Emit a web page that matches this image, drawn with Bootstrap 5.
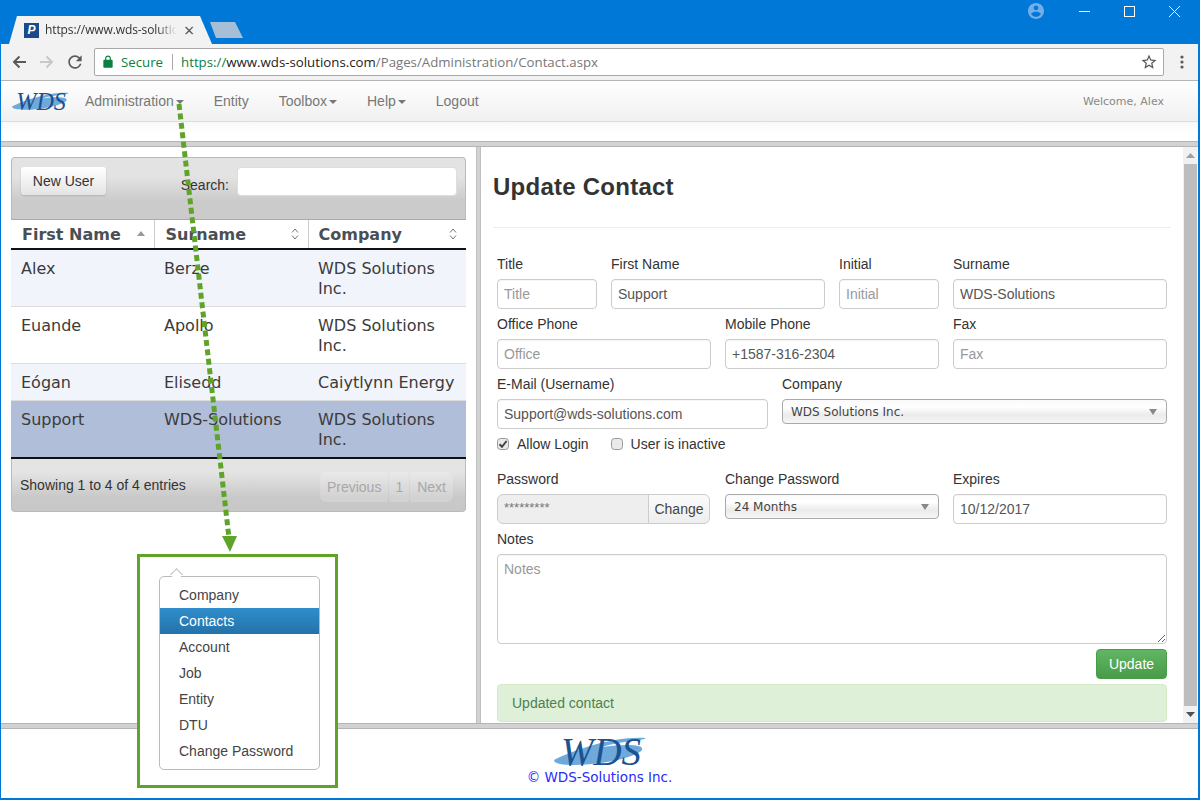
<!DOCTYPE html>
<html lang="en">
  <head>
    <meta charset="UTF-8" />
    <title>Update Contact</title>
    <link href="https://cdn.jsdelivr.net/npm/bootstrap@5.3.3/dist/css/bootstrap.min.css" rel="stylesheet" />
    <style>
      html, body { margin: 0; height: 800px; overflow: hidden; background: #fff; }
      body { font-family: "Liberation Sans", Arial, sans-serif; font-size: 14px; color: #333; line-height: 20px; }
      .app-window { position: relative; width: 1200px; height: 800px; border: solid #0078d7; border-width: 0 2px 2px 1px; overflow: hidden; }

      /* browser chrome */
      .title-bar { height: 44px; margin: 0 -2px 0 -1px; background: #0078d7; padding: 0 3px 0 9px; }
      .tab-shape { width: 203px; height: 28px; margin-top: 16px; padding: 0 0 0 15px; background: #f2f2f2; clip-path: polygon(0 100%, 8px 0, 191px 0, 203px 100%); font-family: "Open Sans", sans-serif; font-size: 12px; }
      .tab-icon { width: 15px; height: 15px; background: #1a4a8a; color: #fff; font: italic bold 12px/15px "Liberation Sans", sans-serif; text-align: center; flex: none; }
      .tab-title { width: 132px; margin-left: 6px; white-space: nowrap; letter-spacing: -.1px; -webkit-mask-image: linear-gradient(90deg, #000 85%, transparent); mask-image: linear-gradient(90deg, #000 85%, transparent); color: #333; }
      .tab-close { margin-left: 7px; color: #555; font-size: 18px; }
      .new-tab { width: 33px; height: 16px; margin: 22px 0 0 -2px; background: #a6bfd6; clip-path: polygon(0 0, 25px 0, 33px 100%, 6px 100%); }
      .win-user { margin: 3px 18px 0 0; }
      .win-btn { width: 45px; height: 22px; }
      .tool-bar { height: 37px; background: #f2f2f2; border-bottom: 1px solid #b4b4b4; padding: 4px 0 0 0; }
      .tool-btn { width: 28px; height: 28px; flex: none; }
      .addr-box { width: 1070px; height: 28px; margin-left: 5px; background: #fff; border: 1px solid #a9a9a9; border-radius: 2px; padding: 0 5px 0 6px; font: 13.25px/26px "Open Sans", sans-serif; color: #777; white-space: nowrap; }
      .addr-secure { color: #0b8043; margin-left: 6px; }
      .addr-sep { width: 1px; height: 16px; background: #a9a9a9; margin: 0 8px 0 9px; }
      .addr-host { color: #222; }
      .addr-https { color: #0b8043; }

      /* site navbar */
      .site-nav { height: 41px; padding: 0 !important; background: linear-gradient(#fff, #f0f0f0); border-bottom: 1px solid #ddd; flex-wrap: nowrap; }
      .site-nav .nav-link { padding: 0; color: #777; font-size: 14px; line-height: 41px; }
      .site-nav .dropdown-toggle::after { margin-left: 2px; vertical-align: 2px; border-top-width: 4px; border-right-width: 4px; border-left-width: 4px; }
      .nav-logo { margin: 0 16px 0 11px; line-height: 0; }
      .logo-art { overflow: visible; }
      .nav-gap { gap: 30px; }
      .nav-welcome { margin-left: auto; padding-right: 34px; font: 11px "DejaVu Sans", Verdana, sans-serif; color: #888; }
      .blank-strip { height: 19px; background: linear-gradient(#f8f8f8, #fff 60%); }
      .split-h { height: 6px; background: #d2d2d2; border-top: 1px solid #b4b4b4; border-bottom: 1px solid #b4b4b4; }

      /* panes */
      .pane-row { height: 576px; }
      .left-pane { width: 475px; padding: 10px 10px 0 10px; flex: none; }
      .split-v { width: 5px; background: #d2d2d2; border-left: 1px solid #c0c0c0; border-right: 1px solid #c0c0c0; flex: none; }
      .right-pane { width: 716px; flex: none; padding: 0 0 0 12px; overflow: hidden; }

      .users-box { width: 455px; }
      .users-top { height: 63px; background: linear-gradient(#e3e3e3 30%, #cbcbcb 70%); border: 1px solid #bbb; border-bottom: 1px solid #aaa; border-radius: 4px 4px 0 0; padding: 9px 8px 0 9px; }
      .btn-plain { height: 28px; width: 85px; padding: 0; font-size: 14px; color: #333; background: linear-gradient(#fff, #e4e4e4); border: 0; border-radius: 3px; box-shadow: 0 1px 2px rgba(0,0,0,.15); }
      .search-label { margin: 8px 8px 0 auto; }
      .search-input { width: 220px; height: 29px; border: 1px solid #ddd; border-radius: 4px; padding: 0 8px; background: #fff; }
      .users-table { width: 455px; margin: 0; table-layout: fixed; font: 16px/20px "DejaVu Sans", Verdana, sans-serif; color: #333; }
      .users-table > thead th { height: 29px; padding: 1px 10px 0 11px; vertical-align: middle; font-weight: bold; color: #4a4f55; font-size: 16px; background: #fff; border-bottom: 2px solid #111; border-right: 1px solid #ccc; position: relative; }
      .users-table > thead th:last-child { border-right: 0; padding-left: 10px; }
      .users-table > tbody > tr > td { padding: 9px 4px 7px 10px; border-bottom: 1px solid #ddd; background: #fff; color: #3b3b3b; box-shadow: none; }
      .users-table > tbody > tr.row-odd > td { background: #f1f5fb; }
      .users-table > tbody > tr.row-pick > td { background: #b0bed9; border-bottom: 2px solid #111; }
      .sort-mark { position: absolute; right: 8px; top: 7px; }
      .users-foot { height: 53px; background: linear-gradient(#e4e4e4 25%, #c8c8c8 75%); border: 1px solid #bbb; border-top: 0; border-radius: 0 0 4px 4px; padding: 0 12px 0 8px; }
      .pager { margin: 3px 0 0; gap: 2px; }
      .pager .page-link { height: 30px; padding: 0 7px; line-height: 30px; font-size: 14px; color: #a8a8a8; background: rgba(255,255,255,.18); border: 0; border-radius: 2px; }
      .pager .page-num { padding: 0 6px; }

      .form-title { margin: 0; padding-top: 26px; height: 80px; font: bold 24px/28px "Liberation Sans", sans-serif; color: #333; letter-spacing: .25px; }
      .form-rule { margin: 0 0 26px; width: 678px; border: 0; border-top: 1px solid #eee; opacity: 1; }
      .form-wrap { width: 684px; margin-left: -3px; }
      .field-row { --bs-gutter-x: 14px; --bs-gutter-y: 0; margin: 0; }
      .field-row > div { margin-bottom: 5px; }
      .field-label { display: block; height: 20px; margin-bottom: 5px; line-height: 20px; color: #333; }
      .field-input { height: 30px; padding: 0 6px; font-size: 14px; color: #555; border: 1px solid #ccc; border-radius: 4px; box-shadow: inset 0 1px 1px rgba(0,0,0,.04); }
      .field-input::placeholder { color: #999; }
      .field-select { height: 25px; padding: 1px 24px 0 8px; font: 12px/23px "DejaVu Sans", sans-serif; color: #444; border: 1px solid #aaa; border-radius: 4px;
        background-color: #f4f4f4;
        background-image: url("data:image/svg+xml,%3Csvg xmlns='http://www.w3.org/2000/svg' width='8' height='6'%3E%3Cpath d='M0 0h8L4 6z' fill='%23888'/%3E%3C/svg%3E"), linear-gradient(#fafafa, #fff 30%, #ebebeb 65%, #f6f6f6);
        background-repeat: no-repeat; background-position: right 9px center, 0 0; background-size: 8px 6px, 100% 100%; }
      .pwd-group { width: 213px; }
      .pwd-input { height: 30px; padding: 0 6px 3px; background: #eee !important; color: #777; font-size: 13px; border: 1px solid #ccc; }
      .pwd-change { width: 62px; padding: 0; justify-content: center; background: linear-gradient(#fafafa, #eee); color: #444; font-size: 14px; border: 1px solid #ccc; }
      .check-row { height: 20px; margin: 0 7px 15px; gap: 22px; }
      .check-item { display: flex; align-items: center; gap: 8px; margin: 0; }
      .check-box { width: 12px; height: 12px; margin: 0; background-color: #e9e9e9; border: 1px solid #999; border-radius: 2px; }
      .check-box:checked { background-color: #e9e9e9; border-color: #999; background-size: 12px; background-image: url("data:image/svg+xml,%3Csvg xmlns='http://www.w3.org/2000/svg' viewBox='0 0 12 12'%3E%3Cpath d='M2.5 6.2 5 8.8 9.6 3' fill='none' stroke='%23444' stroke-width='2'/%3E%3C/svg%3E"); }
      .notes-input { height: 90px; padding: 4px 6px; }
      .btn-update { width: 71px; height: 30px; padding: 0; margin: 0 7px 5px auto; display: block; font-size: 14px; color: #fff; background: linear-gradient(#62b562, #489b48); border: 1px solid #489b48; border-radius: 4px; }
      .note-ok { height: 38px; width: 670px; margin: 0 0 0 7px; padding: 8px 14px; background: #dff0d8; border: 1px solid #d6e9c6; border-radius: 4px; color: #4d8050; font-size: 14px; line-height: 20px; }
      .form-col { width: 684px; flex: none; }
      .scroll-track { width: 14px; margin-left: 6px; background: #f1f1f1; flex: none; }
      .scroll-thumb { flex: 1; background: #bdbdbd; margin-left: 1px; }
      .scroll-end { height: 17px; display: flex; align-items: center; justify-content: center; }

      /* footer */
      .page-foot { height: 70px; text-align: center; padding-top: 6px; margin-left: 0; }
      .foot-copy { font: 13.5px/16px "DejaVu Sans", Verdana, sans-serif; color: #2a2aff; margin-top: 2px; }

      /* annotation */
      .note-arrow { position: absolute; left: 0; top: 0; pointer-events: none; }
      .note-box { position: absolute; left: 136px; top: 554px; width: 201px; height: 234px; padding: 19px 0 0 19px; background: #fff; border: 3px solid #5fa428; }
      .menu-demo { position: static; display: block; width: 161px; min-width: 0; margin: 0; padding: 5px 0; border: 1px solid #bbb; border-radius: 5px; --bs-dropdown-zindex: 1; }
      .menu-demo .dropdown-item { height: 26px; padding: 0 19px; line-height: 26px; font-size: 14px; color: #444; }
      .menu-demo .dropdown-item.active { color: #fff; background: linear-gradient(#2f8ecb, #2472a9); }
      .menu-tip { position: absolute; left: 32px; top: 13px; width: 9px; height: 9px; background: #fff; border-left: 1px solid #bbb; border-top: 1px solid #bbb; transform: rotate(45deg); z-index: 2; }
    </style>
  </head>
  <body>
    <div class="app-window">
      <div class="title-bar d-flex">
        <div class="tab-shape d-flex align-items-center">
          <span class="tab-icon">P</span>
          <span class="tab-title">https://www.wds-solution</span>
          <span class="tab-close">&times;</span>
        </div>
        <div class="new-tab"></div>
        <div class="ms-auto d-flex align-items-start">
          <svg class="win-user" width="16" height="16" viewBox="2 2 20 20"><path fill="#74aee8" d="M12 2C6.48 2 2 6.48 2 12s4.48 10 10 10 10-4.48 10-10S17.52 2 12 2zm0 3c1.66 0 3 1.34 3 3s-1.34 3-3 3-3-1.34-3-3 1.34-3 3-3zm0 14.2c-2.5 0-4.71-1.28-6-3.22.03-1.99 4-3.08 6-3.08 1.99 0 5.97 1.09 6 3.08-1.29 1.94-3.5 3.22-6 3.22z"/></svg>
          <div class="win-btn d-flex align-items-center justify-content-center"><svg width="11" height="11"><path d="M0 5.5h11" stroke="#fff"/></svg></div>
          <div class="win-btn d-flex align-items-center justify-content-center"><svg width="11" height="11"><rect x=".5" y=".5" width="10" height="10" fill="none" stroke="#fff"/></svg></div>
          <div class="win-btn d-flex align-items-center justify-content-center"><svg width="11" height="11"><path d="M0 0l11 11M11 0L0 11" stroke="#fff"/></svg></div>
        </div>
      </div>

      <div class="tool-bar d-flex">
        <div class="tool-btn d-flex align-items-center justify-content-center ms-1"><svg width="16" height="16" viewBox="0 0 16 16"><path d="M15 8H3M8.5 2.5 3 8l5.5 5.5" fill="none" stroke="#5a5a5a" stroke-width="2"/></svg></div>
        <div class="tool-btn d-flex align-items-center justify-content-center"><svg width="16" height="16" viewBox="0 0 16 16"><path d="M1 8h12M7.5 2.5 13 8l-5.5 5.5" fill="none" stroke="#c8c8c8" stroke-width="2"/></svg></div>
        <div class="tool-btn d-flex align-items-center justify-content-center"><svg width="20" height="20" viewBox="0 0 24 24"><path fill="#5a5a5a" d="M17.65 6.35A7.958 7.958 0 0 0 12 4c-4.42 0-7.99 3.58-7.99 8s3.57 8 7.99 8c3.73 0 6.84-2.55 7.73-6h-2.08A5.99 5.99 0 0 1 12 18c-3.31 0-6-2.69-6-6s2.69-6 6-6c1.66 0 3.14.69 4.22 1.78L13 11h7V4l-2.35 2.35z"/></svg></div>
        <div class="addr-box d-flex align-items-center">
          <svg width="14" height="14" viewBox="0 0 24 24"><path fill="#0b8043" d="M18 8h-1V6c0-2.76-2.24-5-5-5S7 3.24 7 6v2H6c-1.1 0-2 .9-2 2v10c0 1.1.9 2 2 2h12c1.1 0 2-.9 2-2V10c0-1.1-.9-2-2-2zM9 6c0-1.66 1.34-3 3-3s3 1.34 3 3v2H9V6z"/></svg>
          <span class="addr-secure">Secure</span>
          <span class="addr-sep"></span>
          <span><span class="addr-https">https://</span><span class="addr-host">www.wds-solutions.com</span>/Pages/Administration/Contact.aspx</span>
          <svg class="ms-auto" width="18" height="18" viewBox="0 0 24 24"><path fill="#555" d="M22 9.24l-7.19-.62L12 2 9.19 8.63 2 9.24l5.46 4.73L5.82 21 12 17.27 18.18 21l-1.63-7.03L22 9.24zM12 15.4l-3.76 2.27 1-4.28-3.32-2.88 4.38-.38L12 6.1l1.71 4.04 4.38.38-3.32 2.88 1 4.28L12 15.4z"/></svg>
        </div>
        <div class="tool-btn d-flex align-items-center justify-content-center ms-1"><svg width="4" height="16"><circle cx="2" cy="3" r="1.6" fill="#5a5a5a"/><circle cx="2" cy="8" r="1.6" fill="#5a5a5a"/><circle cx="2" cy="13" r="1.6" fill="#5a5a5a"/></svg></div>
      </div>

      <nav class="navbar site-nav">
        <a class="nav-logo" href="#">
          <svg class="logo-art" width="57" height="22" viewBox="0 0 92 32">
            <path fill="#6fa9dc" d="M0 25C18 16 58 1 92 3c-3 3-26 3-44 9C70 9 91 9 88 15 80 25 26 33 6 29 2 28 0 27 0 25z"/>
            <text x="7" y="30" font-family="Liberation Serif, serif" font-style="italic" font-size="40" fill="#1b5290" textLength="80" lengthAdjust="spacingAndGlyphs">WDS</text>
          </svg>
        </a>
        <ul class="nav nav-gap">
          <li class="nav-item"><a class="nav-link dropdown-toggle" href="#">Administration</a></li>
          <li class="nav-item"><a class="nav-link" href="#">Entity</a></li>
          <li class="nav-item"><a class="nav-link dropdown-toggle" href="#">Toolbox</a></li>
          <li class="nav-item"><a class="nav-link dropdown-toggle" href="#">Help</a></li>
          <li class="nav-item"><a class="nav-link" href="#">Logout</a></li>
        </ul>
        <span class="nav-welcome">Welcome, Alex</span>
      </nav>
      <div class="blank-strip"></div>
      <div class="split-h"></div>

      <div class="pane-row d-flex">
        <div class="left-pane">
          <div class="users-box">
            <div class="users-top d-flex">
              <button type="button" class="btn btn-plain">New User</button>
              <label class="search-label">Search:</label>
              <input type="text" class="search-input" />
            </div>
            <table class="table users-table">
              <colgroup><col style="width:143px" /><col style="width:154px" /><col style="width:158px" /></colgroup>
              <thead>
                <tr>
                  <th>First Name<svg class="sort-mark" width="10" height="14"><path d="M1 9h8L5 4z" fill="#999"/></svg></th>
                  <th>Surname<svg class="sort-mark" width="10" height="14"><path d="M2 5.5 5 2l3 3.5M2 8.5 5 12l3-3.5" fill="none" stroke="#777"/></svg></th>
                  <th>Company<svg class="sort-mark" width="10" height="14"><path d="M2 5.5 5 2l3 3.5M2 8.5 5 12l3-3.5" fill="none" stroke="#777"/></svg></th>
                </tr>
              </thead>
              <tbody>
                <tr class="row-odd"><td>Alex</td><td>Berze</td><td>WDS Solutions Inc.</td></tr>
                <tr><td>Euande</td><td>Apollo</td><td>WDS Solutions Inc.</td></tr>
                <tr class="row-odd"><td>Eógan</td><td>Elisedd</td><td>Caiytlynn Energy</td></tr>
                <tr class="row-pick"><td>Support</td><td>WDS-Solutions</td><td>WDS Solutions Inc.</td></tr>
              </tbody>
            </table>
            <div class="users-foot d-flex align-items-center justify-content-between">
              <span>Showing 1 to 4 of 4 entries</span>
              <ul class="pagination pager">
                <li class="page-item disabled"><a class="page-link" href="#">Previous</a></li>
                <li class="page-item disabled"><a class="page-link page-num" href="#">1</a></li>
                <li class="page-item disabled"><a class="page-link" href="#">Next</a></li>
              </ul>
            </div>
          </div>
        </div>
        <div class="split-v"></div>
        <div class="right-pane d-flex">
          <div class="form-col">
            <h1 class="form-title">Update Contact</h1>
            <hr class="form-rule" />
            <form class="form-wrap">
              <div class="row field-row">
                <div class="col-2"><label class="field-label">Title</label><input class="form-control field-input" placeholder="Title" /></div>
                <div class="col-4"><label class="field-label">First Name</label><input class="form-control field-input" value="Support" /></div>
                <div class="col-2"><label class="field-label">Initial</label><input class="form-control field-input" placeholder="Initial" /></div>
                <div class="col-4"><label class="field-label">Surname</label><input class="form-control field-input" value="WDS-Solutions" /></div>
              </div>
              <div class="row field-row">
                <div class="col-4"><label class="field-label">Office Phone</label><input class="form-control field-input" placeholder="Office" /></div>
                <div class="col-4"><label class="field-label">Mobile Phone</label><input class="form-control field-input" value="+1587-316-2304" /></div>
                <div class="col-4"><label class="field-label">Fax</label><input class="form-control field-input" placeholder="Fax" /></div>
              </div>
              <div class="row field-row">
                <div class="col-5"><label class="field-label">E-Mail (Username)</label><input class="form-control field-input" value="Support@wds-solutions.com" /></div>
                <div class="col-7"><label class="field-label">Company</label><select class="form-select field-select"><option>WDS Solutions Inc.</option></select></div>
              </div>
              <div class="check-row d-flex">
                <label class="check-item"><input type="checkbox" class="form-check-input check-box" checked />Allow Login</label>
                <label class="check-item"><input type="checkbox" class="form-check-input check-box" />User is inactive</label>
              </div>
              <div class="row field-row">
                <div class="col-4"><label class="field-label">Password</label>
                  <div class="input-group pwd-group"><input class="form-control pwd-input" value="*********" disabled /><span class="input-group-text pwd-change">Change</span></div>
                </div>
                <div class="col-4"><label class="field-label">Change Password</label><select class="form-select field-select"><option>24 Months</option></select></div>
                <div class="col-4"><label class="field-label">Expires</label><input class="form-control field-input" value="10/12/2017" /></div>
              </div>
              <div class="row field-row">
                <div class="col-12"><label class="field-label">Notes</label><textarea class="form-control field-input notes-input" placeholder="Notes"></textarea></div>
              </div>
              <div class="form-foot">
                <button type="button" class="btn btn-update">Update</button>
                <div class="note-ok alert alert-success" role="alert">Updated contact</div>
              </div>
            </form>
          </div>
          <div class="scroll-track d-flex flex-column">
            <div class="scroll-end"><svg width="9" height="5"><path d="M0 5h9L4.5 0z" fill="#a0a0a0"/></svg></div>
            <div class="scroll-thumb"></div>
            <div class="scroll-end"><svg width="9" height="5"><path d="M0 0h9L4.5 5z" fill="#505050"/></svg></div>
          </div>
        </div>
      </div>

      <div class="split-h"></div>
      <footer class="page-foot">
        <svg class="logo-art d-block mx-auto" width="92" height="32" viewBox="0 0 92 32">
          <path fill="#6fa9dc" d="M0 25C18 16 58 1 92 3c-3 3-26 3-44 9C70 9 91 9 88 15 80 25 26 33 6 29 2 28 0 27 0 25z"/>
          <text x="7" y="30" font-family="Liberation Serif, serif" font-style="italic" font-size="40" fill="#1b5290" textLength="80" lengthAdjust="spacingAndGlyphs">WDS</text>
        </svg>
        <div class="foot-copy">© WDS-Solutions Inc.</div>
      </footer>

      <svg class="note-arrow" width="1200" height="800">
        <line x1="178" y1="104" x2="228" y2="538" stroke="#5fa428" stroke-width="5" stroke-dasharray="6 3.5"/>
        <path d="M221 536h15l-7 16z" fill="#5fa428"/>
      </svg>
      <div class="note-box">
        <span class="menu-tip"></span>
        <ul class="dropdown-menu menu-demo show list-unstyled">
          <li><a class="dropdown-item" href="#">Company</a></li>
          <li><a class="dropdown-item active" href="#">Contacts</a></li>
          <li><a class="dropdown-item" href="#">Account</a></li>
          <li><a class="dropdown-item" href="#">Job</a></li>
          <li><a class="dropdown-item" href="#">Entity</a></li>
          <li><a class="dropdown-item" href="#">DTU</a></li>
          <li><a class="dropdown-item" href="#">Change Password</a></li>
        </ul>
      </div>
    </div>
    <script src="https://cdn.jsdelivr.net/npm/bootstrap@5.3.3/dist/js/bootstrap.bundle.min.js"></script>
  </body>
</html>
